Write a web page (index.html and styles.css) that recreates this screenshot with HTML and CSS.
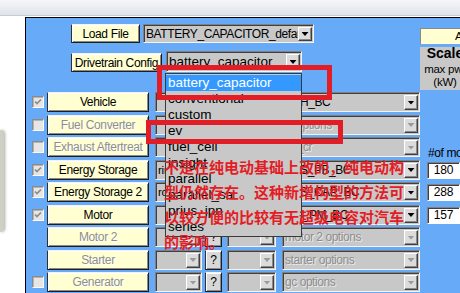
FILE: index.html
```html
<!DOCTYPE html>
<html lang="zh">
<head>
<meta charset="utf-8">
<title>Vehicle Input</title>
<link rel="stylesheet" href="styles.css">
</head>
<body>
<div class="topbar"></div>
<div class="main">
  <div class="gutter"><div class="blob"></div></div>
  <div class="panel">
    <div class="top">
      <div class="top-left">
        <div class="tr1">
          <div class="btn btn-load">Load File</div>
          <div class="dd dd-file"><span class="dd-text">BATTERY_CAPACITOR_default_in</span><span class="arrow"></span></div>
        </div>
        <div class="tr2">
          <div class="btn btn-dt">Drivetrain Config</div>
          <div class="dd dd-dt"><span class="dd-text">battery_capacitor</span><span class="arrow"></span></div>
        </div>
      </div>
      <div class="top-right">
        <div class="hdr">Autosize</div>
        <div class="scale"><b>Scale</b><span class="s1">max pwr</span><span>(kW)</span></div>
      </div>
    </div>
    <div class="rows">
      <div class="row">
        <span class="cbslot"><span class="cb"><svg width="10" height="10" viewBox="0 0 10 10"><path d="M2 4.5 L4 6.5 L8 2.5" fill="none" stroke="#8c8c8c" stroke-width="1.7"/></svg></span></span>
        <div class="btn comp">Vehicle</div>
        <div class="dd sm1"><span class="dd-text"></span><span class="arrow"></span></div>
        <div class="btn q">?</div>
        <div class="dd sm2"><span class="dd-text"></span><span class="arrow"></span></div>
        <div class="dd big"><span class="dd-text">VEH_BC</span><span class="arrow"></span></div>
      </div>
      <div class="row">
        <span class="cbslot"><span class="cb"></span></span>
        <div class="btn comp off">Fuel Converter</div>
        <div class="dd sm1 off"><span class="dd-text"></span><span class="arrow"></span></div>
        <div class="btn q">?</div>
        <div class="dd sm2 off"><span class="dd-text"></span><span class="arrow"></span></div>
        <div class="dd big off"><span class="dd-text">fc options</span><span class="arrow"></span></div>
      </div>
      <div class="row">
        <span class="cbslot"><span class="cb"></span></span>
        <div class="btn comp off">Exhaust Aftertreat</div>
        <div class="dd sm1 off"><span class="dd-text"></span><span class="arrow"></span></div>
        <div class="btn q">?</div>
        <div class="dd sm2 off"><span class="dd-text"></span><span class="arrow"></span></div>
        <div class="dd big off"><span class="dd-text">ex_cr</span><span class="arrow"></span></div>
        <div class="lbl">#of mod</div>
      </div>
      <div class="row">
        <span class="cbslot"><span class="cb"><svg width="10" height="10" viewBox="0 0 10 10"><path d="M2 4.5 L4 6.5 L8 2.5" fill="none" stroke="#8c8c8c" stroke-width="1.7"/></svg></span></span>
        <div class="btn comp">Energy Storage</div>
        <div class="dd sm1"><span class="dd-text">rint</span><span class="arrow"></span></div>
        <div class="btn q">?</div>
        <div class="dd sm2"><span class="dd-text"></span><span class="arrow"></span></div>
        <div class="dd big"><span class="dd-text">ESS_PB_BC</span><span class="arrow"></span></div>
        <div class="num">180</div>
      </div>
      <div class="row">
        <span class="cbslot"><span class="cb"><svg width="10" height="10" viewBox="0 0 10 10"><path d="M2 4.5 L4 6.5 L8 2.5" fill="none" stroke="#8c8c8c" stroke-width="1.7"/></svg></span></span>
        <div class="btn comp">Energy Storage 2</div>
        <div class="dd sm1"><span class="dd-text">rc</span><span class="arrow"></span></div>
        <div class="btn q">?</div>
        <div class="dd sm2"><span class="dd-text"></span><span class="arrow"></span></div>
        <div class="dd big"><span class="dd-text">ESS_CAP_BC</span><span class="arrow"></span></div>
        <div class="num">288</div>
      </div>
      <div class="row">
        <span class="cbslot"><span class="cb"><svg width="10" height="10" viewBox="0 0 10 10"><path d="M2 4.5 L4 6.5 L8 2.5" fill="none" stroke="#8c8c8c" stroke-width="1.7"/></svg></span></span>
        <div class="btn comp">Motor</div>
        <div class="dd sm1"><span class="dd-text"></span><span class="arrow"></span></div>
        <div class="btn q">?</div>
        <div class="dd sm2"><span class="dd-text"></span><span class="arrow"></span></div>
        <div class="dd big"><span class="dd-text">MC_PM_BC</span><span class="arrow"></span></div>
        <div class="num">157</div>
      </div>
      <div class="row">
        <span class="cbslot"></span>
        <div class="btn comp off">Motor 2</div>
        <div class="dd sm1 off"><span class="dd-text"></span><span class="arrow"></span></div>
        <div class="btn q">?</div>
        <div class="dd sm2 off"><span class="dd-text"></span><span class="arrow"></span></div>
        <div class="dd big off"><span class="dd-text">motor 2 options</span><span class="arrow"></span></div>
      </div>
      <div class="row">
        <span class="cbslot"></span>
        <div class="btn comp off">Starter</div>
        <div class="dd sm1 off"><span class="dd-text"></span><span class="arrow"></span></div>
        <div class="btn q">?</div>
        <div class="dd sm2 off"><span class="dd-text"></span><span class="arrow"></span></div>
        <div class="dd big off"><span class="dd-text">starter options</span><span class="arrow"></span></div>
      </div>
      <div class="row">
        <span class="cbslot"><span class="cb"></span></span>
        <div class="btn comp off">Generator</div>
        <div class="dd sm1 off"><span class="dd-text"></span><span class="arrow"></span></div>
        <div class="btn q">?</div>
        <div class="dd sm2 off"><span class="dd-text"></span><span class="arrow"></span></div>
        <div class="dd big off"><span class="dd-text">gc options</span><span class="arrow"></span></div>
      </div>
    </div>
  </div>
</div>

<ul class="popup">
  <li class="sel">battery_capacitor</li>
  <li>conventional</li>
  <li>custom</li>
  <li>ev</li>
  <li>fuel_cell</li>
  <li>insight</li>
  <li>parallel</li>
  <li>parallel_sa</li>
  <li>prius_jpn</li>
  <li>series</li>
</ul>

<div class="mark mark1"></div>
<div class="mark mark2"></div>

<p class="note">不是在纯电动基础上改的，纯电动构<br>型仍然存在。这种新增构型的方法可<br>以较方便的比较有无超级电容对汽车<br>的影响。</p>
</body>
</html>
```

FILE: styles.css
```css
* { box-sizing: border-box; }
html, body { margin: 0; padding: 0; }
body {
  width: 460px;
  height: 293px;
  overflow: hidden;
  position: relative;
  background: #fff;
  font-family: "Liberation Sans", Arial, sans-serif;
  font-size: 11.5px;
  letter-spacing: -0.25px;
  color: #000;
}

.topbar {
  height: 16px;
  background: linear-gradient(#f5f6f9, #dfe3ea);
  border-bottom: 1px solid #c6cbd4;
}

.main {
  display: flex;
  margin-top: 1px;
  height: 276px;
}

.gutter {
  flex: none;
  width: 25px;
  padding-top: 113px;
  background: #fff;
}
.blob {
  width: 4px;
  height: 102px;
  background: #cfcfc3;
  border-radius: 0 5px 5px 0;
  box-shadow: 1px 0 3px rgba(0, 0, 0, 0.35);
}

.panel {
  flex: 1;
  min-width: 0;
  overflow: hidden;
  background: #66aaf8;
  border-left: 1px solid #000;
  border-top: 1px solid #000;
  display: flex;
  flex-direction: column;
}

.top { display: flex; height: 74px; flex: none; }
.top-left { flex: none; width: 394px; padding: 6px 0 0 45px; }
.tr1 { display: flex; gap: 3px; height: 19px; }
.tr2 { display: flex; gap: 4px; height: 21px; margin-top: 8px; align-items: flex-end; }
.tr1 > *, .tr2 > * { flex: none; }

/* cream push buttons */
.btn {
  display: flex;
  align-items: center;
  justify-content: center;
  white-space: nowrap;
  background: #ffffd2;
  border: 1px solid;
  border-color: #f4f4f4 #1e1e1e #1e1e1e #303030;
  box-shadow: inset 1px 1px #fff, inset -1px -1px #8a8a8a;
  line-height: 1;
  font-size: 12px;
  letter-spacing: -0.35px;
}
.btn.off { color: #8e8e8e; text-shadow: 1px 1px 0 #fff; }
.btn-load { width: 69px; height: 19px; }
.btn-dt { width: 91px; height: 19px; }

/* popup menus */
.dd {
  display: flex;
  align-items: stretch;
  background: #c8c8c8;
  border: 1px solid;
  border-color: #808080 #f4f4f4 #f4f4f4 #808080;
  box-shadow: inset 1px 1px #404040;
  overflow: hidden;
}
.dd-text {
  flex: 1;
  min-width: 0;
  padding-left: 2px;
  white-space: nowrap;
  overflow: hidden;
  display: flex;
  align-items: center;
}
.dd.off .dd-text { color: #8e8e8e; text-shadow: 1px 1px 0 #ececec; }
.arrow {
  flex: none;
  width: 14px;
  margin: 2px 1px 1px 0;
  background: #dcdcdc;
  border: 1px solid;
  border-color: #fff #404040 #404040 #fff;
  box-shadow: inset -1px -1px #8a8a8a;
  display: flex;
  align-items: center;
  justify-content: center;
}
.arrow::after {
  content: "";
  width: 7px;
  height: 4px;
  background: #000;
  clip-path: polygon(0 0, 100% 0, 50% 100%);
}
.dd.off .arrow::after { background: #9a9a9a; }

.dd-file { width: 171px; height: 19px; font-size: 12px; letter-spacing: -0.4px; }
.dd-dt {
  width: 136px;
  height: 21px;
  font-size: 13.5px;
  letter-spacing: 0;
}

.top-right { flex: none; width: 60px; padding-top: 10px; }
.hdr {
  height: 16px;
  background: #ffffd2;
  border-top: 1px solid #8a8a8a;
  border-left: 1px solid #8a8a8a;
  padding-left: 34px;
  line-height: 15px;
  white-space: nowrap;
  overflow: hidden;
}
.scale {
  margin-top: 3px;
  width: 50px;
  height: 43px;
  background: #c8c8c8;
  display: flex;
  flex-direction: column;
  align-items: center;
  line-height: 13px;
  white-space: nowrap;
}
.scale b { font-size: 14px; letter-spacing: 0; }
.scale .s1 { margin-top: 3px; }

/* component rows */
.rows { display: flex; flex-direction: column; }
.row {
  display: flex;
  align-items: flex-start;
  height: 22.5px;
  flex: none;
}
.row > * { flex: none; }
.cbslot { width: 21px; height: 20px; padding: 4px 0 0 6px; }
.cb {
  display: flex;
  align-items: center;
  justify-content: center;
  width: 12px;
  height: 12px;
  background: #e6e6e6;
  border: 1px solid;
  border-color: #8a8a8a #fbfbfb #fbfbfb #8a8a8a;
  box-shadow: inset 1px 1px #b4b4b4;
}
.comp { width: 102px; height: 20px; }
.sm1 { width: 47px; height: 20px; margin-left: 6px; }
.q { width: 17px; height: 20px; margin-left: 3px; background: #d8d8d8; }
.sm2 { width: 49px; height: 20px; margin-left: 5px; }
.big { width: 138px; height: 20px; margin-left: 6px; font-size: 12px; letter-spacing: -0.45px; }
.num {
  width: 33px;
  height: 17px;
  margin: 2px 0 0 7px;
  background: #fff;
  border: 1px solid;
  border-color: #808080 #fff #fff #808080;
  box-shadow: inset 1px 1px #404040;
  text-align: center;
  line-height: 15px;
  font-size: 12px;
}
.lbl {
  align-self: flex-end;
  margin-left: 8px;
  line-height: 14px;
  white-space: nowrap;
  font-size: 12px;
  letter-spacing: -0.4px;
}

/* opened drop-down list */
.popup {
  position: absolute;
  left: 165px;
  top: 73px;
  width: 137px;
  height: 164px;
  margin: 0;
  padding: 1px 0 0;
  list-style: none;
  background: #c8c8c8;
  border: 1px solid #3a3a3a;
  font-size: 13.5px;
  letter-spacing: 0;
}
.popup li { height: 16px; line-height: 16px; padding-left: 2px; white-space: nowrap; }
.popup li.sel { background: #3399ff; color: #fff; }

/* annotation */
.mark { position: absolute; border: 5px solid #e31d25; }
.mark1 { left: 157px; top: 65px; width: 175px; height: 35px; }
.mark2 { left: 146px; top: 120px; width: 197px; height: 24px; }

.note {
  position: absolute;
  left: 164px;
  top: 154px;
  margin: 0;
  white-space: nowrap;
  font-family: "Noto Sans CJK SC", sans-serif;
  font-weight: 700;
  font-size: 15px;
  line-height: 25px;
  letter-spacing: 0;
  color: #e31d25;
}
```
